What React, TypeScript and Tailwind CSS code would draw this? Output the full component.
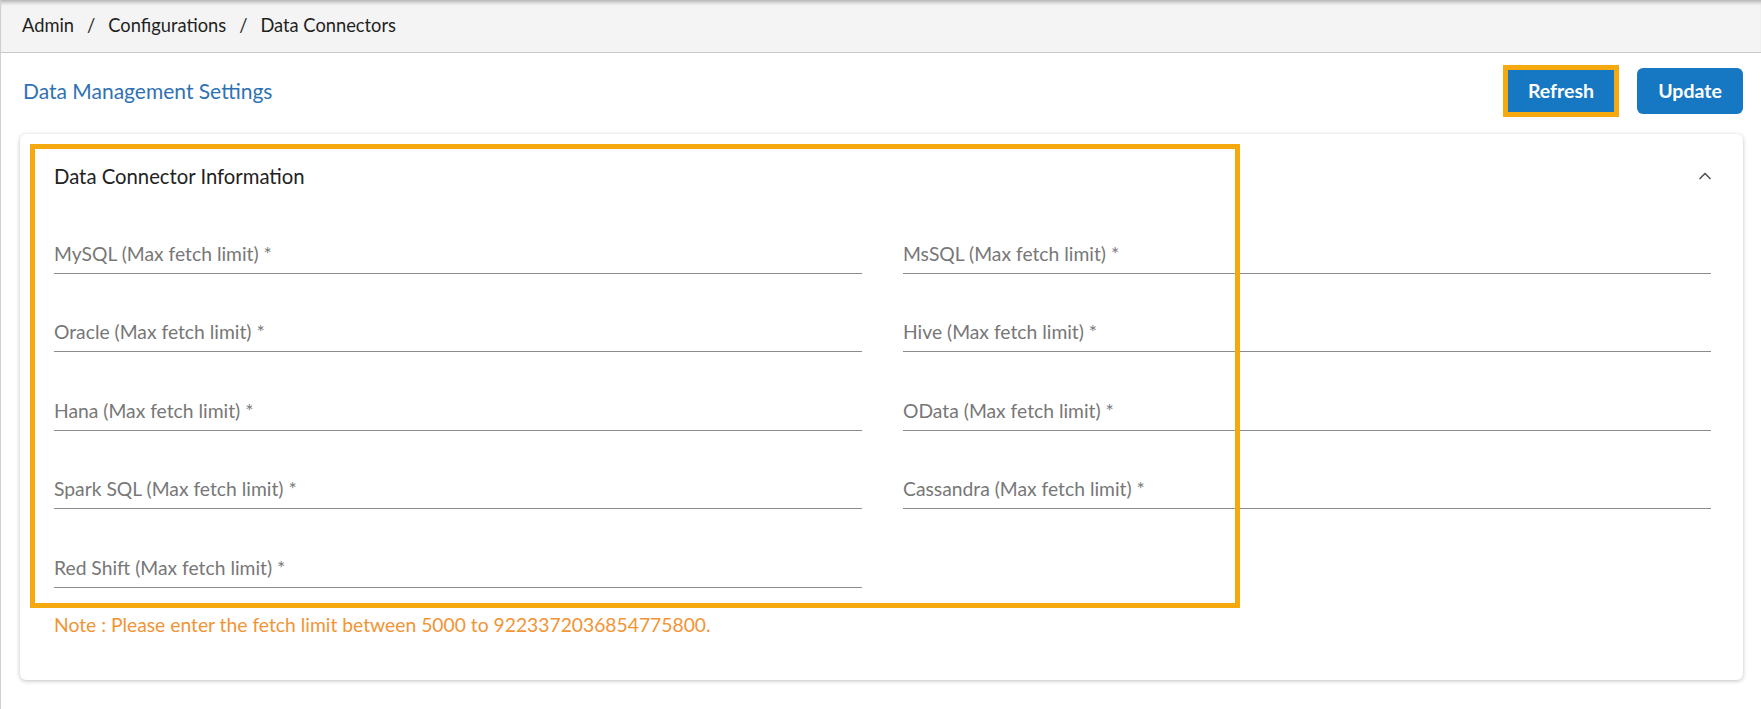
import { ChevronUp } from "lucide-react";

const fields = [
  "MySQL (Max fetch limit) *",
  "MsSQL (Max fetch limit) *",
  "Oracle (Max fetch limit) *",
  "Hive (Max fetch limit) *",
  "Hana (Max fetch limit) *",
  "OData (Max fetch limit) *",
  "Spark SQL (Max fetch limit) *",
  "Cassandra (Max fetch limit) *",
  "Red Shift (Max fetch limit) *",
];

const Field = ({ label }: { label: string }) => (
  <div className="flex h-[78.6px] items-end border-b border-[#8c8c8c] pb-[7px]">
    <span className="text-[19.3px] leading-6 text-[#777]">{label}</span>
  </div>
);

export default function App() {
  return (
    <div className="min-h-screen border-l border-[#d0d0d0] bg-white font-['Lato',sans-serif]">
      <header className="flex h-[53px] items-center border-b border-[#c8c8c8] bg-[#f4f4f4] pl-[21px] shadow-[inset_0_5px_4px_-3px_rgba(0,0,0,0.3)]">
        <nav className="flex items-center gap-[13px] text-[18.3px] text-[#1f1f1f]">
          <span>Admin</span>
          <span>/</span>
          <span>Configurations</span>
          <span>/</span>
          <span>Data Connectors</span>
        </nav>
      </header>

      <div className="flex h-[81px] items-center justify-between pb-[5px] pl-[22px] pr-[18px]">
        <h1 className="text-[21px] text-[#2f72b3]">Data Management Settings</h1>
        <div className="flex items-center gap-[18px]">
          <div className="border-[5px] border-[#f5a90f]">
            <button className="h-[42px] w-[106px] bg-[#1677c2] text-[19.5px] font-bold text-white">
              Refresh
            </button>
          </div>
          <button className="h-[46px] w-[106px] rounded-md bg-[#1677c2] text-[19.5px] font-bold text-white">
            Update
          </button>
        </div>
      </div>

      <section className="relative mr-[18px] ml-[19px] rounded-md bg-white pt-[30px] pr-[32px] pb-[43px] pl-[34px] shadow-[0_1px_4px_rgba(0,0,0,0.25)]">
        <div className="mb-[7px] flex items-center justify-between">
          <h2 className="text-[20.3px] leading-6 text-[#222]">Data Connector Information</h2>
          <ChevronUp className="-mr-[4px] size-5 text-[#555]" strokeWidth={2} />
        </div>

        <div className="grid grid-cols-2 gap-x-[41px]">
          {fields.map((label) => (
            <Field key={label} label={label} />
          ))}
        </div>

        <p className="mt-[25px] text-[19.3px] leading-6 text-[#f29434]">
          Note : Please enter the fetch limit between 5000 to 9223372036854775800.
        </p>

        <div className="pointer-events-none absolute top-[10px] left-[10px] h-[464px] w-[1210px] border-[5px] border-[#f5a90f]" />
      </section>
    </div>
  );
}
